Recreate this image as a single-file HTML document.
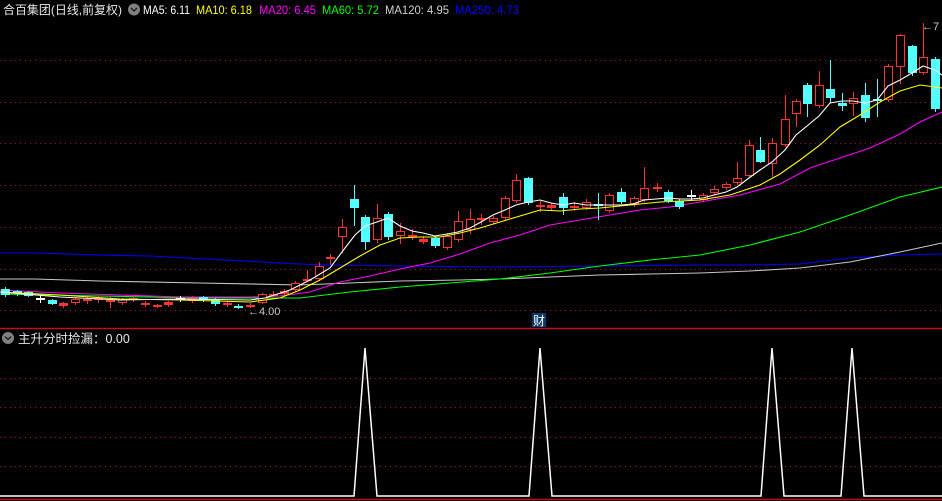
<!DOCTYPE html>
<html><head><meta charset="utf-8"><style>
html,body{margin:0;padding:0;background:#000;width:942px;height:501px;overflow:hidden}
svg{display:block}
text{font-family:"Liberation Sans","Noto Sans CJK SC",sans-serif}
</style></head><body>
<svg id="s" width="942" height="501" viewBox="0 0 942 501" xmlns="http://www.w3.org/2000/svg">
<rect width="942" height="501" fill="#000"/>
<g stroke="#8a1c1c" stroke-width="1" stroke-dasharray="1,4">
<line x1="0" y1="60.5" x2="942" y2="60.5"/><line x1="0" y1="102.5" x2="942" y2="102.5"/>
<line x1="0" y1="143.5" x2="942" y2="143.5"/><line x1="0" y1="185.5" x2="942" y2="185.5"/>
<line x1="0" y1="227.5" x2="942" y2="227.5"/><line x1="0" y1="269.5" x2="942" y2="269.5"/>
<line x1="0" y1="310.5" x2="942" y2="310.5"/>
<line x1="0" y1="378.5" x2="942" y2="378.5"/><line x1="0" y1="407.5" x2="942" y2="407.5"/>
<line x1="0" y1="437.5" x2="942" y2="437.5"/><line x1="0" y1="466.5" x2="942" y2="466.5"/>
</g>
<line x1="0" y1="328.5" x2="942" y2="328.5" stroke="#c01010" stroke-width="1.5"/>
<line x1="0" y1="499.5" x2="942" y2="499.5" stroke="#c01010" stroke-width="1.5"/>
<g fill="none" stroke-width="1.1">
<polyline stroke="#0000ff" points="0,253 35,253 100,255 150,256 300,264 330,265 400,266 500,267 600,266 700,265 750,265 800,264 850,258 900,255 942,254"/>
<polyline stroke="#c8c8c8" points="0,279 35,279 100,281 200,283 300,285 350,283 400,281 460,280 500,279 550,277 600,275 650,274 700,273 750,271 800,268 850,262 900,252 942,243"/>
<polyline stroke="#00ff00" points="0,294 100,296 200,298 300,298 350,292 400,287 450,283 500,279 550,273 600,266 650,260 700,255 750,245 800,232 850,215 900,197 942,187"/>
<polyline stroke="#ff00ff" points="0,290 60,293 120,295 180,297 250,297 280,296 310,292 340,282 370,276 400,269 430,263 460,254 490,243 520,235 550,225 580,220 610,215 640,210 670,207 700,202 740,195 780,184 810,168 840,158 870,148 900,134 920,122 942,112"/>
</g>
<g id="c" shape-rendering="crispEdges"></g>
<g fill="none" stroke-width="1.1">
<polyline stroke="#ffff00" points="0,292 60,295 120,299 180,300 250,302 280,298 300,290 320,280 340,268 360,256 380,245 400,238 420,237 440,237 460,233 480,228 500,222 520,216 540,210 560,211 580,209 600,208 630,205 660,202 700,200 730,195 760,185 780,174 800,160 820,145 840,127 860,115 880,102 900,91 920,85 935,87 942,88"/>
<polyline stroke="#ffffff" points="0,292 60,297 120,300 180,299 250,300 265,298 290,290 310,280 330,268 345,248 355,235 365,226 377,222 388,218 400,226 412,231 423,233 435,236 447,234 458,232 470,228 481,222 493,215 505,210 516,205 528,202 540,200 551,203 563,205 574,203 586,205 598,205 609,205 621,205 633,204 644,200 656,199 668,198 680,199 691,199 703,198 714,195 726,192 737,187 749,178 760,170 772,162 785,150 796,135 807,126 819,116 830,103 842,101 853,101 865,103 877,100 888,86 900,80 912,73 923,66 935,70 942,75"/>
</g>
<text x="3" y="14" fill="#e6e6e6" font-size="12" textLength="119" lengthAdjust="spacingAndGlyphs">合百集团(日线,前复权)</text>
<circle cx="134" cy="9.5" r="6" fill="#808080"/>
<path d="M131,8 L134,11 L137,8" stroke="#222" stroke-width="1.5" fill="none"/>
<g font-size="11.5">
<text x="143" y="14" fill="#fff" textLength="47" lengthAdjust="spacingAndGlyphs">MA5: 6.11</text>
<text x="196" y="14" fill="#ffff00" textLength="56" lengthAdjust="spacingAndGlyphs">MA10: 6.18</text>
<text x="259" y="14" fill="#ff00ff" textLength="57" lengthAdjust="spacingAndGlyphs">MA20: 6.45</text>
<text x="322" y="14" fill="#00ff00" textLength="57" lengthAdjust="spacingAndGlyphs">MA60: 5.72</text>
<text x="385" y="14" fill="#d0d0d0" textLength="64" lengthAdjust="spacingAndGlyphs">MA120: 4.95</text>
<text x="455" y="14" fill="#0000ff" textLength="64" lengthAdjust="spacingAndGlyphs">MA250: 4.73</text>
</g>
<text x="248" y="315" fill="#c8c8c8" font-size="11">←4.00</text>
<text x="922" y="30" fill="#c8c8c8" font-size="11">←7</text>
<rect x="532" y="313" width="14" height="14" fill="#0a3a6a"/>
<text x="533" y="325" fill="#fff" font-size="12">财</text>
<circle cx="8" cy="338" r="6" fill="#808080"/>
<path d="M5,336.5 L8,339.5 L11,336.5" stroke="#222" stroke-width="1.5" fill="none"/>
<text x="18" y="343" fill="#e6e6e6" font-size="12.5">主升分时捡漏：0.00</text>
<polyline fill="none" stroke="#fff" stroke-width="1.5" points="0,496 354,496 365,348 377,496 529,496 540,348 552,496 761,496 772,348 784,496 841,496 852,348 864,496 942,496"/>
</svg>
<script>
var d=[
[5,289,295,287,297],[17,291,293,290,296],[28,292,296,291,297],[40,299,299,295,303],[52,300,304,299,305],[63,306,303,302,308],[75,303,299,298,305],[87,300,300,297,304],[98,299,299,296,303],[110,301,301,296,308],[122,303,299,298,305],[133,299,299,296,302],[145,304,304,301,307],[157,306,306,304,308],[168,305,302,301,307],[180,299,299,296,302],[192,301,298,296,303],[203,297,300,296,302],[215,300,304,298,306],[227,304,304,301,307],[238,306,308,304,309],[250,306,305,303,308],[262,303,294,293,304],[273,296,294,291,297],[284,294,291,289,296],[295,290,283,281,292],[307,280,279,270,281],[319,279,266,262,281],[330,258,258,254,265],[342,237,227,219,253],[354,199,208,185,226],[365,217,242,215,250],[377,240,218,204,243],[388,214,237,212,240],[400,236,231,223,244],[412,236,236,229,240],[423,242,239,236,244],[435,238,246,236,248],[447,248,236,233,250],[458,240,221,211,242],[470,230,219,209,234],[481,219,219,214,225],[493,222,218,216,224],[505,218,198,196,220],[516,201,180,174,203],[528,178,203,177,205],[540,206,206,201,212],[551,208,205,203,210],[563,197,208,193,215],[574,207,207,202,211],[586,208,202,199,210],[598,205,205,193,220],[609,211,195,193,213],[621,192,202,188,204],[634,204,198,196,207],[644,200,188,167,202],[657,188,188,183,192],[668,192,201,190,203],[679,201,207,199,209],[691,196,196,190,201],[703,200,195,193,202],[714,193,189,186,195],[726,188,184,182,190],[737,183,178,162,185],[749,176,145,140,178],[760,150,162,137,163],[772,164,143,138,177],[785,145,119,95,147],[796,114,101,99,127],[807,85,104,83,117],[819,106,85,71,108],[830,89,98,60,103],[842,103,106,93,111],[853,104,98,92,116],[865,95,118,83,122],[877,99,101,79,117],[888,100,66,64,102],[900,67,35,34,84],[912,46,73,45,76],[923,73,57,23,75],[935,59,109,57,112]];
var s='';
d.forEach(function(c){var x=c[0],o=c[1],cl=c[2],h=c[3],l=c[4];
 var up=cl<o, top=Math.min(o,cl), bot=Math.max(o,cl), col;
 if(o==cl){col=(h<o-5&&l>o+5)?'#54ffff':'#ff3232'; if(x==40||x==180||x==691)col='#fff';
  s+='<rect x="'+x+'" y="'+h+'" width="1" height="'+(l-h)+'" fill="'+col+'"/>';
  s+='<rect x="'+(x-4)+'" y="'+(o-1)+'" width="9" height="2" fill="'+col+'"/>';return;}
 if(up){col='#ff3232';
  s+='<rect x="'+x+'" y="'+h+'" width="1" height="'+(top-h)+'" fill="'+col+'"/>';
  s+='<rect x="'+x+'" y="'+bot+'" width="1" height="'+(l-bot)+'" fill="'+col+'"/>';
  s+='<rect x="'+(x-4)+'" y="'+top+'" width="9" height="'+Math.max(bot-top,2)+'" fill="'+col+'"/>';
  if(bot-top>3)s+='<rect x="'+(x-3)+'" y="'+(top+1)+'" width="7" height="'+(bot-top-2)+'" fill="#000"/>';
 }else{col='#54ffff';
  s+='<rect x="'+x+'" y="'+h+'" width="1" height="'+(l-h)+'" fill="'+col+'"/>';
  s+='<rect x="'+(x-4)+'" y="'+top+'" width="9" height="'+Math.max(bot-top,2)+'" fill="'+col+'"/>';}
});
document.getElementById('c').innerHTML=s;
</script>
</body></html>
